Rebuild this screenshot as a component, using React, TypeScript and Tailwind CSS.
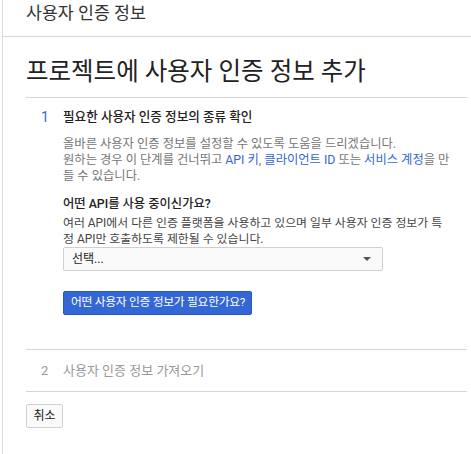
export default function App() {
  const font = { fontFamily: 'Roboto, "Noto Sans CJK KR", sans-serif' };
  return (
    <div className="w-[471px] h-[454px] bg-white overflow-hidden" style={font}>
      <div className="ml-[2px] h-full border-l border-[#dadada]">
        <div className="h-[37px] border-b border-[#d6d6d6] pl-[23px] text-[17.3px] text-[#333] leading-[27px]">
          사용자 인증 정보
        </div>
        <div className="pl-[23px] pr-[4px]">
          <h1 className="pt-[19px] pb-[9px] text-[24.5px] leading-[32px] text-[#222] border-b border-[#d6d6d6]">
            프로젝트에 사용자 인증 정보 추가
          </h1>

          <div className="flex pt-[9px]">
            <div className="w-[37px] pl-[15px] text-[14px] leading-[20px] text-[#3367d6]">1</div>
            <div className="flex-1">
              <div className="text-[12.6px] leading-[20px] font-medium text-[#222]">필요한 사용자 인증 정보의 종류 확인</div>
              <p className="mt-[9px] text-[12.3px] leading-[16px] text-[#757575] whitespace-nowrap">
                올바른 사용자 인증 정보를 설정할 수 있도록 도움을 드리겠습니다.
                <br />
                원하는 경우 이 단계를 건너뛰고 <span className="text-[#3367d6]">API 키</span>,{" "}
                <span className="text-[#3367d6]">클라이언트 ID</span> 또는{" "}
                <span className="text-[#3367d6]">서비스 계정</span>을 만
                <br />
                들 수 있습니다.
              </p>
              <div className="mt-[11px] text-[12.3px] leading-[18px] font-medium text-[#222]">어떤 API를 사용 중이신가요?</div>
              <p className="mt-[2px] text-[11.9px] leading-[16px] text-[#444] whitespace-nowrap">
                여러 API에서 다른 인증 플랫폼을 사용하고 있으며 일부 사용자 인증 정보가 특
                <br />
                정 API만 호출하도록 제한될 수 있습니다.
              </p>
              <div className="mt-[0px] w-[320px] h-[24px] border border-[#d0d0d0] rounded-[2px] bg-[#fafafa] flex items-center justify-between pl-[8px] pr-[11px]">
                <span className="text-[12px] text-[#222]">선택...</span>
                <svg width="8" height="4" viewBox="0 0 8 4">
                  <path d="M0 0h8L4 4z" fill="#555" />
                </svg>
              </div>
              <button className="mt-[20px] h-[24px] pl-[7px] pr-[6px] rounded-[2px] bg-[#3367d6] text-white text-[11.8px] tracking-[-0.3px] border border-[#2a56c6] whitespace-nowrap">
                어떤 사용자 인증 정보가 필요한가요?
              </button>
            </div>
          </div>

          <div className="mt-[34px] border-t border-[#d6d6d6] h-[43px] border-b flex items-center">
            <div className="w-[37px] pl-[15px] text-[13px] text-[#999]">2</div>
            <div className="text-[13px] text-[#999]">사용자 인증 정보 가져오기</div>
          </div>

          <button className="mt-[12px] h-[24px] w-[37px] border border-[#d0d0d0] rounded-[2px] bg-[#fafafa] text-[12px] text-[#222]">
            취소
          </button>
        </div>
      </div>
    </div>
  );
}
